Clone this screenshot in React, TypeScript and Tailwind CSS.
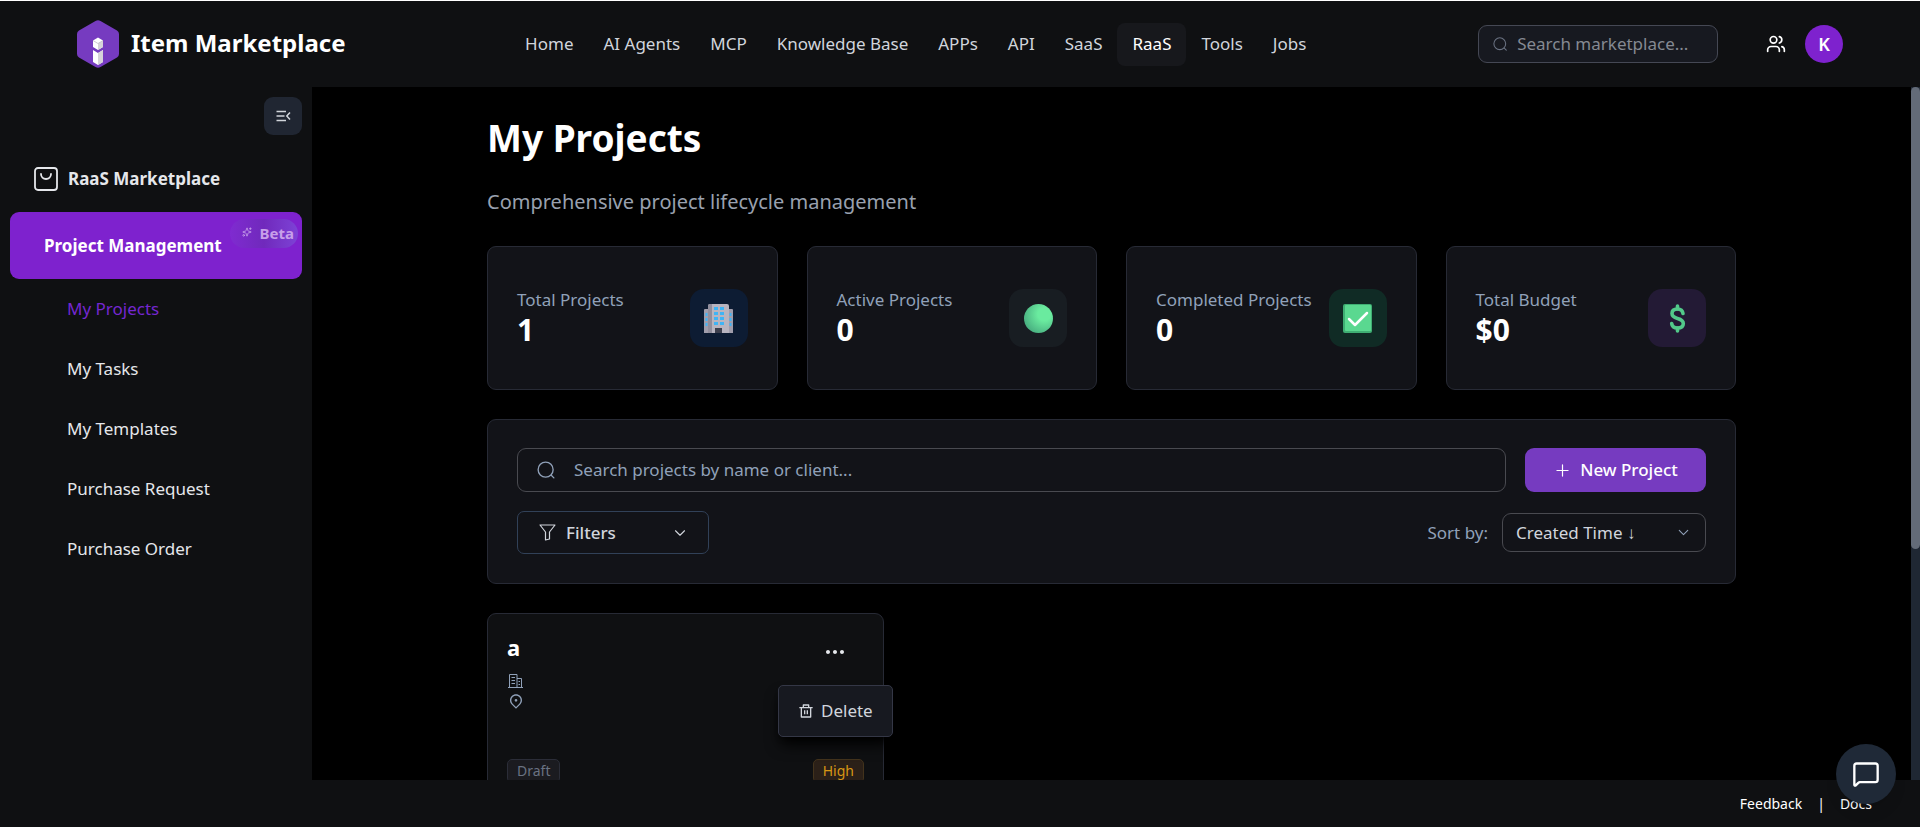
import type { ReactNode } from "react";
import { ChevronDown, MessageSquare, Plus, Sparkles, Users } from "lucide-react";
import { RiDeleteBinLine, RiMapPin2Line, RiMoreFill } from "react-icons/ri";

const navLinks = ["Home", "AI Agents", "MCP", "Knowledge Base", "APPs", "API", "SaaS", "RaaS", "Tools", "Jobs"];
const subLinks = ["My Projects", "My Tasks", "My Templates", "Purchase Request", "Purchase Order"];

const Logo = () => (
  <svg width="42" height="48" viewBox="0 0 42 48">
    <path d="M18.500 1 Q21 -.5 23.500 1 L40 10.500 Q42 11.800 42 14 V34 Q42 36.200 40 37.500 L23.500 47 Q21 48.500 18.500 47 L2 37.500 Q0 36.200 0 34 V14 Q0 11.800 2 10.500 Z" fill="#763bc0" />
    <path d="M21 17.500 L26 20.500 V27 L21 30 L16 27 V20.500 Z" fill="#fff" />
    <path d="M21 23.500 L26 20.500 V27 L21 30 Z" fill="#d6d3d9" />
    <path d="M16 20.500 L21 23.500 L26 20.500" fill="none" stroke="#b9b4bf" strokeWidth=".7" />
    <path d="M16 30 L21 33 L26 30 V42 L21 45 L16 42 Z" fill="#fff" />
    <path d="M21 33 L26 30 V42 L21 45 Z" fill="#d6d3d9" />
  </svg>
);

const SearchIcon = ({ size }: { size: number }) => (
  <svg width={size} height={size} viewBox="0 0 24 24" fill="none" stroke="currentColor" strokeWidth="1.800" strokeLinecap="round">
    <circle cx="11.500" cy="11.500" r="10" />
    <path d="M19 19 L22.500 22.500" />
  </svg>
);

const CollapseIcon = () => (
  <svg width="15" height="12" viewBox="0 0 15 12" fill="none" stroke="#d1d5db" strokeWidth="1.500">
    <path d="M.5 1.500H10 M.5 6H8.500 M.5 10.500H10 M14 2.500L10.800 6L14 9.500" />
  </svg>
);

const BagIcon = () => (
  <svg width="24" height="24" viewBox="0 0 24 24" fill="none" stroke="#e5e7eb" strokeWidth="1.800" strokeLinecap="round">
    <rect x="1" y="1" width="22" height="22" rx="3" />
    <path d="M7 7 a5 5 0 0 0 10 0" />
  </svg>
);

const FilterIcon = () => (
  <svg width="17" height="17" viewBox="0 0 17 17" fill="none" stroke="currentColor" strokeWidth="1.200" strokeLinejoin="round">
    <path d="M1 1H16L10.500 8V15L6.500 16V8Z" />
  </svg>
);

const OfficeIcon = () => (
  <svg width="15" height="15" viewBox="0 0 15 15" fill="none" stroke="currentColor">
    <path d="M0 14.500H15 M1.500 14V1.500H9V14 M9 5.500H13.500V14 M3.500 4.500H7 M3.500 7.500H7 M3.500 10.500H7 M10.500 8.500H12 M10.500 11.500H12" />
  </svg>
);

const windows = [4, 9, 14, 19];

const BuildingArt = () => (
  <svg width="29" height="29" viewBox="0 0 29 29">
    <path d="M0 6 Q0 5 1 5 H28 Q29 5 29 6 V29 H0Z" fill="#a09dab" />
    <path d="M4 2 Q4 0 6 0 H23 Q25 0 25 2 V29 H4Z" fill="#b8b4bf" />
    <path d="M4 2 Q4 0 6 0 H8 V29 H4Z" fill="#918e9c" />
    {windows.map((y) => (
      <g key={y} fill="#3fb4f5">
        <rect x="10" y={y - 1} width="4" height="3" />
        <rect x="16" y={y - 1} width="4" height="3" />
        <rect x="1.500" y={y + 5} width="2" height="3" opacity={y > 15 ? 0 : 1} />
        <rect x="25.500" y={y + 5} width="2" height="3" opacity={y > 15 ? 0 : 1} />
      </g>
    ))}
    <rect x="11" y="24" width="7" height="5" fill="#3d3f4d" />
  </svg>
);

const CircleArt = () => (
  <svg width="29" height="29" viewBox="0 0 29 29">
    <defs>
      <radialGradient id="ball" cx=".7" cy=".35" r=".75">
        <stop offset=".3" stopColor="#6aeb9f" />
        <stop offset="1" stopColor="#48ae80" />
      </radialGradient>
    </defs>
    <circle cx="14.500" cy="14.500" r="14.500" fill="url(#ball)" />
  </svg>
);

const CheckArt = () => (
  <svg width="29" height="29" viewBox="0 0 29 29">
    <rect width="29" height="29" rx="2" fill="#3fae73" />
    <rect x="2" y="1" width="26" height="26" rx="1" fill="#5ad890" />
    <path d="M6 15 L12 21 L24 9" fill="none" stroke="#fff" strokeWidth="2.500" strokeLinecap="round" strokeLinejoin="round" />
  </svg>
);

const DollarArt = () => (
  <svg width="29" height="29" viewBox="0 0 29 29" fill="none" stroke="#52c98a" strokeWidth="3.600" strokeLinecap="round">
    <path d="M14.500 2V5 M14.500 24V27" />
    <path d="M20 9.500 C19.500 6 17.500 5 14.500 5 C11 5 9 6.800 9 9.600 C9 12.500 11 13.500 14.500 14.400 C18 15.300 20.300 16.500 20.300 19.500 C20.300 22.500 18 24 14.500 24 C11 24 9 22.500 8.700 19.500" />
  </svg>
);

const StatCard = ({ label, value, tint, children }: { label: string; value: string; tint: string; children: ReactNode }) => (
  <div className="flex items-center justify-between rounded-[9px] border border-[#272a35] bg-[#121318] px-[29px] py-[39px]">
    <div className="pb-1">
      <p className="text-[17px] leading-7 text-slate-400">{label}</p>
      <p className="text-3xl leading-8 font-bold text-white">{value}</p>
    </div>
    <div className={`flex size-[58px] shrink-0 items-center justify-center rounded-[14px] ${tint}`}>{children}</div>
  </div>
);

const Header = () => (
  <header className="flex h-[87px] shrink-0 items-center justify-between border-t border-white bg-[#0f1012] px-[77px]">
    <a href="#" className="flex items-center gap-3 text-2xl font-bold text-white">
      <Logo />
      <span className="pb-0.5">Item Marketplace</span>
    </a>
    <nav className="ml-2 flex text-[17px]">
      {navLinks.map((name) => (
        <a
          key={name}
          href="#"
          className={`rounded-lg px-[15px] pt-[7px] pb-[9px] leading-[27px] ${name === "RaaS" ? "bg-[#17181c] text-white" : "text-gray-300"}`}
        >
          {name}
        </a>
      ))}
    </nav>
    <div className="flex items-center">
      <label className="flex h-[38px] w-[240px] items-center gap-[10px] rounded-[9px] border border-[#454854] bg-[#171920] px-[14px] text-gray-500">
        <SearchIcon size={16} />
        <input
          type="text"
          aria-label="Search marketplace"
          placeholder="Search marketplace..."
          className="w-full min-w-0 bg-transparent text-[17px] text-white outline-none placeholder:text-[#858992]"
        />
      </label>
      <button aria-label="Team" className="ml-12 text-white">
        <Users size={20} />
      </button>
      <button className="ml-[19px] size-[38px] rounded-full bg-[#7e22ce] text-lg font-semibold text-white">K</button>
    </div>
  </header>
);

const Sidebar = () => (
  <aside className="w-[312px] shrink-0 bg-[#0f1012] px-[10px] pt-[10px]">
    <div className="flex justify-end">
      <button aria-label="Collapse sidebar" className="flex size-[38px] items-center justify-center rounded-[9px] bg-[#202632]">
        <CollapseIcon />
      </button>
    </div>
    <a href="#" className="mt-[10px] flex h-[67px] items-center gap-[10px] pl-6 text-[17px] font-bold text-gray-200">
      <BagIcon />
      RaaS Marketplace
    </a>
    <a href="#" className="relative flex h-[67px] items-center rounded-[9px] bg-[#7e22ce] pl-[34px] text-[17px] font-bold text-white">
      Project Management
      <span className="absolute top-[7px] right-1 flex h-[29px] items-center gap-2 rounded-full bg-linear-to-r from-[#7f2bd0] via-[#7029bc] to-[#7d42d6] pr-1 pl-3 text-[15px] text-[#c79fe9]">
        <Sparkles size={10} className="mb-1" />
        Beta
      </span>
    </a>
    <ul className="text-[17px]">
      {subLinks.map((name) => (
        <li key={name}>
          <a href="#" className={`flex h-[60px] items-center pl-[57px] ${name === "My Projects" ? "text-[#7527d0]" : "text-gray-200"}`}>
            {name}
          </a>
        </li>
      ))}
    </ul>
  </aside>
);

const Toolbar = () => (
  <section className="rounded-[9px] border border-[#272a35] bg-[#121318] px-[29px] pt-7 pb-[29px] text-[17px]">
    <div className="flex gap-[19px]">
      <label className="flex h-11 flex-1 items-center gap-[19px] rounded-[9px] border border-[#494a50] px-[19px] text-slate-400">
        <SearchIcon size={18} />
        <input
          type="text"
          aria-label="Search projects"
          placeholder="Search projects by name or client..."
          className="flex-1 bg-transparent text-white outline-none placeholder:text-slate-400"
        />
      </label>
      <button className="flex h-11 w-[181px] items-center justify-center gap-2 rounded-[9px] bg-[#763bc0] font-medium text-white">
        <Plus size={19} strokeWidth={1.5} />
        New Project
      </button>
    </div>
    <div className="mt-[19px] flex items-center justify-between">
      <button className="flex h-[43px] w-48 items-center rounded-[7px] border border-slate-700 pr-[19px] pl-[21px] font-medium text-gray-300">
        <FilterIcon />
        <span className="ml-[10px]">Filters</span>
        <ChevronDown size={18} strokeWidth={1.5} className="ml-auto" />
      </button>
      <div className="flex items-center gap-[14px]">
        <label htmlFor="sort" className="text-slate-400">
          Sort by:
        </label>
        <div className="relative">
          <select id="sort" className="h-[39px] w-[204px] appearance-none rounded-[9px] border border-[#494a50] bg-[#121318] pl-[13px] text-gray-300">
            <option>Created Time ↓</option>
          </select>
          <ChevronDown size={17} strokeWidth={1.5} className="pointer-events-none absolute top-[11px] right-[14px] text-slate-400" />
        </div>
      </div>
    </div>
  </section>
);

const ProjectCard = () => (
  <article className="relative h-[260px] rounded-[9px] border border-[#272a35] bg-[#0f1012] px-[19px] pt-[17px]">
    <div className="flex h-[33px] items-end justify-between">
      <h2 className="self-start text-[22px] leading-8 font-bold text-white">a</h2>
      <button aria-label="More" className="mr-[17px] text-gray-200">
        <RiMoreFill size={24} />
      </button>
    </div>
    <div className="mt-[9px] flex flex-col gap-[5px] pl-px text-slate-400">
      <OfficeIcon />
      <RiMapPin2Line size={16} />
    </div>
    <div className="mt-[50px] flex justify-between text-sm leading-[22px]">
      <span className="rounded-[5px] border border-[#2b2d38] bg-[#1b1b20] px-[9px] text-gray-500">Draft</span>
      <span className="rounded-[5px] border border-[#43331c] bg-[#2b2018] px-[9px] text-[#d89614]">High</span>
    </div>
    <button className="absolute top-[71px] right-[-10px] flex h-[52px] w-[115px] items-center gap-[7px] rounded-[5px] border border-[#343746] bg-[#171920] pl-[19px] text-[17px] text-gray-300 shadow-lg shadow-black">
      <RiDeleteBinLine size={16} />
      Delete
    </button>
  </article>
);

export default function App() {
  return (
    <div className="flex h-screen flex-col overflow-hidden bg-black font-['Noto_Sans',sans-serif]">
      <Header />
      <div className="flex min-h-0 flex-1">
        <Sidebar />
        <main className="min-w-0 flex-1 overflow-hidden">
          <div className="mx-auto max-w-[1249px] pt-7">
            <h1 className="text-[37px] leading-[46px] font-bold text-white">My Projects</h1>
            <p className="mt-[25px] text-xl leading-8 text-gray-400">Comprehensive project lifecycle management</p>
            <div className="mt-7 grid grid-cols-4 gap-[29px]">
              <StatCard label="Total Projects" value="1" tint="bg-[#0d1c33]">
                <BuildingArt />
              </StatCard>
              <StatCard label="Active Projects" value="0" tint="bg-[#181d22]">
                <CircleArt />
              </StatCard>
              <StatCard label="Completed Projects" value="0" tint="bg-[#102b25]">
                <CheckArt />
              </StatCard>
              <StatCard label="Total Budget" value="$0" tint="bg-[#231a35]">
                <DollarArt />
              </StatCard>
            </div>
            <div className="mt-[29px]">
              <Toolbar />
            </div>
            <div className="mt-[29px] grid grid-cols-3 gap-[29px]">
              <ProjectCard />
            </div>
          </div>
        </main>
        {/* scroll track */}
        <div className="w-[9px] shrink-0 bg-[#1f2733]">
          <div className="h-2/3 rounded-full bg-[#636b78]" />
        </div>
      </div>
      <footer className="flex h-[47px] shrink-0 items-center justify-end gap-[15px] bg-[#0f1012] pr-12 text-sm text-white">
        <a href="#">Feedback</a>
        <span>|</span>
        <a href="#">Docs</a>
      </footer>
      <button aria-label="Open chat" className="fixed right-6 bottom-[23px] flex size-[60px] items-center justify-center rounded-full bg-[#1f2937] text-white shadow-lg">
        <MessageSquare size={28} />
      </button>
    </div>
  );
}
